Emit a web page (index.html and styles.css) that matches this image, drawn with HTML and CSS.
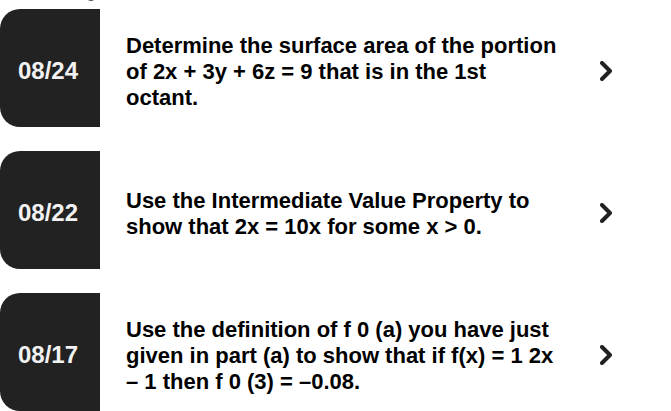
FILE: index.html
```html
<!DOCTYPE html>
<html lang="en">
<head>
<meta charset="utf-8">
<meta name="viewport" content="width=device-width, initial-scale=1">
<title>Questions</title>
<link rel="stylesheet" href="styles.css">
</head>
<body>
<main class="list">
  <svg class="mark" viewBox="0 0 6 2" aria-hidden="true"><path d="M0 0h6Q5 1 3 1T0 0"/></svg>
  <a class="card" href="#">
    <time class="date">08/24</time>
    <span class="question">Determine the surface area of the portion of 2x + 3y + 6z = 9 that is in the 1st octant.</span>
    <svg class="chevron" viewBox="0 0 12 20" aria-hidden="true"><path d="M2 2 10 10 2 18"/></svg>
  </a>
  <a class="card" href="#">
    <time class="date">08/22</time>
    <span class="question">Use the Intermediate Value Property to show that 2x = 10x for some x &gt; 0.</span>
    <svg class="chevron" viewBox="0 0 12 20" aria-hidden="true"><path d="M2 2 10 10 2 18"/></svg>
  </a>
  <a class="card" href="#">
    <time class="date">08/17</time>
    <span class="question">Use the definition of f 0 (a) you have just given in part (a) to show that if f(x) = 1 2x – 1 then f 0 (3) = –0.08.</span>
    <svg class="chevron" viewBox="0 0 12 20" aria-hidden="true"><path d="M2 2 10 10 2 18"/></svg>
  </a>
</main>
</body>
</html>
```

FILE: styles.css
```css
* { box-sizing: border-box; }
body {
  margin: 0;
  background: #fff;
  color: #000;
  font-family: "Liberation Sans", Arial, sans-serif;
}
.list {
  display: flex;
  flex-direction: column;
  gap: 24px;
  padding-top: 9px;
}
.mark {
  position: absolute;
  top: 0;
  left: 88px;
  width: 6px;
  height: 2px;
  fill: #555;
}
.card {
  display: grid;
  grid-template-columns: 100px 1fr 12px;
  align-items: center;
  min-height: 118px;
  padding-right: 59px;
  color: inherit;
  text-decoration: none;
}
.date {
  display: flex;
  align-items: center;
  align-self: stretch;
  padding: 6px 0 0 18px;
  border-radius: 20px 0 0 20px;
  background: #222;
  color: #f2f2f2;
  font-size: 24px;
  font-weight: bold;
}
.question {
  padding: 8px 40px 0 26px;
  font-size: 22px;
  font-weight: bold;
  line-height: 26px;
}
.chevron {
  width: 12px;
  height: 20px;
  margin-top: 6px;
  fill: none;
  stroke: #222;
  stroke-width: 4;
  stroke-linecap: round;
  stroke-linejoin: round;
}
```
